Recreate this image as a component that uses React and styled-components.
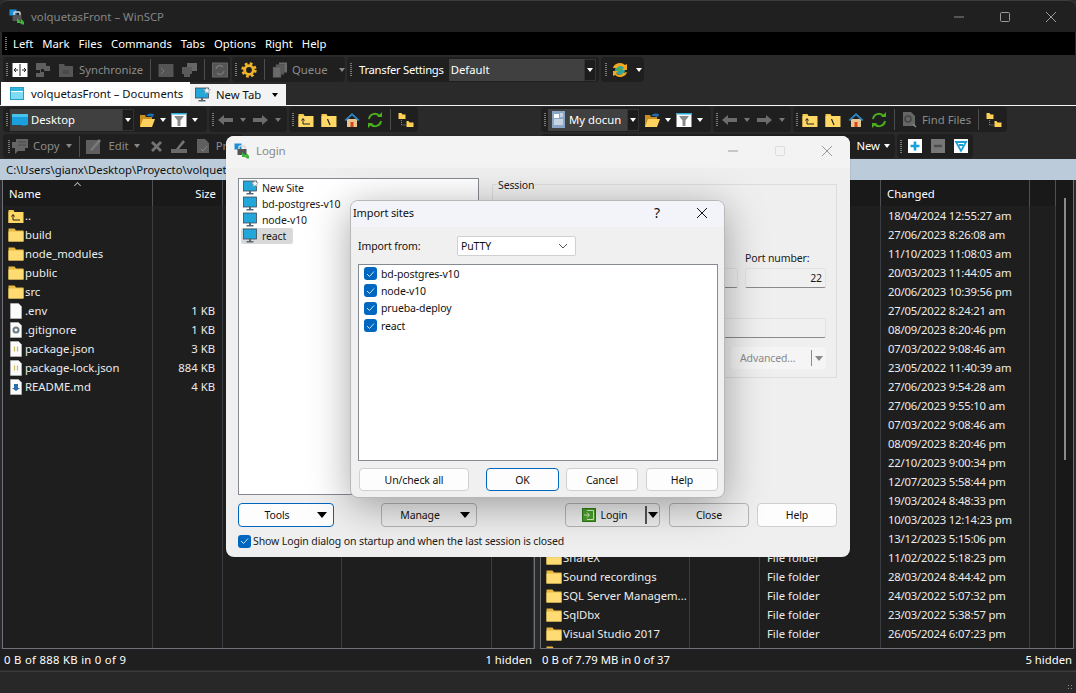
import React from 'react'
import styled, { createGlobalStyle } from 'styled-components'

const Global = createGlobalStyle`
  html, body { margin: 0; padding: 0; background: #2a2a2a; }
  * { box-sizing: border-box; }
`

const Ico = styled.svg`
  display: block;
  flex: none;
`
const Svg = ({ w = 16, h = 16, children }) => (
  <Ico width={w} height={h} viewBox={`0 0 ${w} ${h}`}>{children}</Ico>
)

const Logo = () => (
  <Svg>
    <rect x="0.5" y="0.5" width="7" height="6" fill="#1c8fd8" />
    <rect x="5" y="3" width="6" height="8" rx="1" fill="none" stroke="#d8d8d8" strokeWidth="1.5" />
    <rect x="3.5" y="6" width="9" height="6" fill="#555" />
    <path d="M8 9l4 4v-2.5h1l2 2.5v2.5h-2l-2-1.500h-3z" fill="#3db53a" />
  </Svg>
)
const Compare = () => (
  <Svg>
    <rect x="0.5" y="1" width="15" height="14" fill="#fff" />
    <path d="M8 2v12" stroke="#222" />
    <path d="M2 8h4M4 6L2 8l2 2M14 8h-4M12 6l2 2-2 2" stroke="#222" fill="none" />
  </Svg>
)
const SyncGrey = () => (
  <Svg>
    <path d="M1 1h10v3h4v5H9V7H6v3h3v5H1v-4h4V8H1z" fill="#5f5f5f" />
  </Svg>
)
const FolderGrey = () => (
  <Svg>
    <path d="M1 2h5l1 2h8v11H1z" fill="#565656" />
    <path d="M5 8h6v4H5z" fill="#4a4a4a" />
  </Svg>
)
const TermGrey = () => (
  <Svg>
    <rect x="0.5" y="2" width="15" height="13" fill="#555" />
    <path d="M3 6l3 3-3 3" stroke="#777" fill="none" />
  </Svg>
)
const MonitorsGrey = () => (
  <Svg>
    <rect x="6" y="1" width="10" height="8" fill="#666" />
    <rect x="1" y="5" width="10" height="7" fill="#5a5a5a" />
    <rect x="3" y="12" width="6" height="3" fill="#5a5a5a" />
  </Svg>
)
const RefreshGrey = () => (
  <Svg>
    <rect x="0.5" y="1" width="15" height="14" fill="#555" stroke="#666" />
    <path d="M4 7a4 4 0 0 1 7-2M12 9a4 4 0 0 1-7 2" stroke="#777" strokeWidth="1.500" fill="none" />
  </Svg>
)
const Gear = () => (
  <Svg>
    <circle cx="8" cy="8" r="6.200" fill="none" stroke="#f0b429" strokeWidth="3" strokeDasharray="2.600 2.270" />
    <circle cx="8" cy="8" r="4.300" fill="none" stroke="#f0b429" strokeWidth="2.800" />
  </Svg>
)
const QueueGrey = () => (
  <Svg>
    <rect x="7" y="0.500" width="8" height="10" fill="#6a6a6a" />
    <rect x="4" y="2.500" width="8" height="10" fill="#5c5c5c" stroke="#444" strokeWidth="0.500" />
    <rect x="1" y="5" width="8" height="10.500" fill="#6a6a6a" stroke="#444" strokeWidth="0.500" />
  </Svg>
)
const GlobeSync = () => (
  <Svg w={18} h={18}>
    <circle cx="9" cy="9" r="5" fill="#2fa6a0" />
    <path d="M6 7l3-1 1 3-3 2z" fill="#4caf3c" />
    <path d="M2 7a7 6 0 0 1 12-3l2-1v6h-5l2-2a4 4 0 0 0-7 0z" fill="#f0a820" />
    <path d="M16 11a7 6 0 0 1-12 3l-2 1v-5h5l-2 2a4 4 0 0 0 7 0z" fill="#f0a820" />
  </Svg>
)
const FolderOpen = () => (
  <Svg>
    <path d="M1 3h5l1 2h6v10H1z" fill="#c98f1f" />
    <path d="M1 15l3-8h12l-3 8z" fill="#ffd25e" />
    <path d="M7 4c2-3 5-3 8-2l-1 3c-2-1-4-1-7-1z" fill="#1f6fb5" />
  </Svg>
)
const Filter = () => (
  <Svg>
    <rect x="0.500" y="1" width="15" height="14" fill="#fff" />
    <rect x="0.500" y="1" width="15" height="1.500" fill="#27a8d8" />
    <path d="M3 4h10L9.500 8.500V14h-3V8.500z" fill="#8a8a8a" />
  </Svg>
)
const ArrowGrey = ({ dir }) => (
  <Svg w={15} h={12}>
    <path d={dir === 'left' ? 'M0 6l6-5v3h9v4H6v3z' : 'M15 6L9 1v3H0v4h9v3z'} fill="#6c6c6c" />
  </Svg>
)
const Parent = () => (
  <Svg>
    <path d="M0.500 2h5l1 2h8.500v11H0.500z" fill="#f7c948" />
    <path d="M0.500 4h15v11H0.500z" fill="#ffd866" />
    <path d="M5 7v5h7M3.500 8.500L5 6.500l1.500 2" stroke="#222" fill="none" />
  </Svg>
)
const RootFolder = () => (
  <Svg>
    <path d="M0.500 2h5l1 2h8.500v11H0.500z" fill="#f7c948" />
    <path d="M0.500 4h15v11H0.500z" fill="#ffd866" />
    <path d="M6.500 7l2.500 6" stroke="#222" strokeWidth="1.200" />
  </Svg>
)
const Home = () => (
  <Svg>
    <path d="M3 7h10v8H3z" fill="#e9c48d" />
    <path d="M0.500 8L8 1l7.500 7-1.500 1L8 3.500 2 9z" fill="#2b85c4" />
    <path d="M6.500 10h3v5h-3z" fill="#d9461e" />
  </Svg>
)
const RefreshGreen = () => (
  <Svg>
    <path d="M2 7a6 6 0 0 1 10.500-3M14 9a6 6 0 0 1-10.500 3" stroke="#4cae1e" strokeWidth="2" fill="none" />
    <path d="M10 5h5V0zM6 11H1v5z" fill="#4cae1e" />
  </Svg>
)
const Tree = () => (
  <Svg>
    <path d="M0.500 1h3l1 1.500h3V7H0.500z" fill="#ffcf56" />
    <path d="M8.500 9h2l1 1.500h4V15h-7z" fill="#ffcf56" />
    <path d="M3.500 8v5h4" stroke="#888" strokeDasharray="1 1" fill="none" />
  </Svg>
)
const Desktop = () => (
  <Svg>
    <rect x="0" y="2" width="16" height="11" fill="#1aa0dc" />
    <rect x="0" y="2" width="16" height="3" fill="#48c3ee" />
    <rect x="10" y="13" width="4" height="1" fill="#1d6fb0" />
  </Svg>
)
const DocBlue = () => (
  <Svg w={13} h={17}>
    <rect x="0" y="0" width="13" height="17" fill="#8aa6c6" />
    <rect x="2" y="3" width="5" height="4" fill="#fff" />
    <path d="M8 3h3M8 5h3M2 9h9M2 11h9M2 13h9" stroke="#fff" />
  </Svg>
)
const CopyGrey = () => (
  <Svg>
    <path d="M4 1h12v9h-3v3h-7l-3 3v-6H0V4h4z" fill="#656565" />
    <path d="M6 4h8M6 7h8" stroke="#4c4c4c" />
  </Svg>
)
const EditGrey = () => (
  <Svg>
    <rect x="1" y="2" width="14" height="14" fill="#5f5f5f" />
    <path d="M5 12L14 1l2 2-9 10z" fill="#7a7a7a" />
  </Svg>
)
const CrossGrey = () => (
  <Svg w={13} h={13}>
    <path d="M1 3l2-2 3.500 3.500L10 1l2 2-3.500 3.500L12 10l-2 2-3.500-3.500L3 12l-2-2 3.500-3.500z" fill="#737373" />
  </Svg>
)
const RenameGrey = () => (
  <Svg>
    <path d="M0 11h16v4H0z" fill="#6a6a6a" />
    <path d="M5 11l7-9 2 2-6 7z" fill="#747474" />
  </Svg>
)
const PropsGrey = () => (
  <Svg>
    <path d="M2 1h8l4 4v10H2z" fill="#5f5f5f" />
    <path d="M6 11l2 2 4-5" stroke="#888" fill="none" />
  </Svg>
)
const SquareOp = ({ sign }) => (
  <Svg w={14} h={14}>
    <rect width="14" height="14" fill={sign === 'minus' ? '#777' : '#fff'} />
    {sign === 'plus' && <path d="M7 2.500v9M2.500 7h9" stroke="#19a0d8" strokeWidth="2.600" />}
    {sign === 'minus' && <path d="M3 7h8" stroke="#4e4e4e" strokeWidth="2.600" />}
    {sign === 'filter' && <path d="M2 3h10L7 12zM5 6h4" stroke="#19a0d8" strokeWidth="1.800" fill="none" />}
  </Svg>
)
const FindGrey = () => (
  <Svg w={15} h={17}>
    <path d="M1 1h8l4 4v10H1z" fill="#666" />
    <circle cx="6" cy="8" r="3" fill="none" stroke="#444" strokeWidth="1.500" />
    <path d="M11 13l3 3" stroke="#888" strokeWidth="1.500" />
  </Svg>
)
const FolderFile = () => (
  <Svg>
    <path d="M0.500 1.500h6l1.500 2h7.500v11h-15z" fill="#e9b93f" />
    <path d="M0.500 4.500h15v10h-15z" fill="#ffdc73" />
  </Svg>
)
const Page = ({ kind }) => (
  <Svg>
    <path d="M2.500 0.500h8l3 3v12h-11z" fill="#fbfbfb" stroke="#d0d0d0" strokeWidth="0.500" />
    {kind === 'gear' && <circle cx="8" cy="8" r="2.500" fill="none" stroke="#6c7a86" strokeWidth="2" />}
    {kind === 'json' && <path d="M6.500 5.500v5M9.500 5.500v5" stroke="#c6bd63" strokeWidth="1.200" />}
    {kind === 'md' && <path d="M6 5h4v4h2l-4 3-4-3h2z" fill="#2a6ea8" />}
  </Svg>
)
const Monitor = ({ star }) => (
  <Svg>
    <rect x="0.500" y="1" width="13" height="10" fill="#23a7d8" stroke="#3f4a55" strokeWidth="0.800" />
    <path d="M6 11h2v2h2.500v1.500h-7V13H6z" fill="#5a6670" />
    {star && <path d="M12 0l1.100 2.300 2.400.3-1.800 1.600.5 2.400-2.200-1.200-2.200 1.200.5-2.400-1.800-1.600 2.400-.3z" fill="#f2f2f2" stroke="#8a8a8a" strokeWidth="0.500" />}
  </Svg>
)
const Check = () => (
  <CheckBox>
    <svg width="9" height="8" viewBox="0 0 9 8"><path d="M1 4l2.500 2.500L8 1.500" stroke="#cfe2f7" fill="none" /></svg>
  </CheckBox>
)
const EnterArrow = () => (
  <svg width="12" height="12" viewBox="0 0 12 12">
    <path d="M4 1.500h6.500v9H4M1 6h5M4 3.500L6.500 6 4 8.500" stroke="#d9eecf" fill="none" />
  </svg>
)

const font = `"Noto Sans", "Open Sans", sans-serif`

const Win = styled.div`
  width: 1076px;
  height: 693px;
  display: flex;
  flex-direction: column;
  position: relative;
  overflow: hidden;
  background: #2a2a2a;
  border-top: 1px solid #3c3c3c;
  border-radius: 8px 8px 0 0;
  font: 11.3px/16px ${font};
  color: #fff;
`
const TitleBar = styled.div`
  height: 31px;
  flex: none;
  background: #202020;
  display: flex;
  align-items: center;
  padding: 0 19px 0 9px;
  gap: 6px;
`
const TitleText = styled.span`
  flex: 1;
  color: #858585;
  font-size: 11.4px;
`
const WinButtons = styled.div`
  display: flex;
  align-items: center;
  gap: 34px;
`
const MenuBar = styled.div`
  height: 23px;
  flex: none;
  margin: 0 1px 2px 2px;
  background: #000;
  display: flex;
  align-items: center;
  padding-left: 3px;
  gap: 9px;
`
const Grip = styled.i`
  display: block;
  width: 2px;
  height: 13px;
  flex: none;
  margin-right: -3px;
  background: repeating-linear-gradient(to bottom, #7a7a7a 0 1px, transparent 1px 2px);
`
const ToolRow = styled.div`
  display: flex;
  gap: 2px;
  height: ${p => p.$h || 25}px;
  flex: none;
  padding-left: 3px;
  margin-bottom: ${p => p.$mb || 0}px;
`
const ToolGroup = styled.div`
  display: flex;
  align-items: center;
  justify-content: ${p => (p.$end ? 'flex-end' : 'flex-start')};
  width: ${p => p.$w}px;
  flex: none;
  overflow: hidden;
  gap: ${p => p.$gap || 7}px;
  padding: 0 ${p => p.$pr || 0}px 0 ${p => p.$pl || 3}px;
  background: #1f1f1f;
  border-radius: 4px;
`
const IconRun = styled.div`
  display: flex;
  align-items: center;
  gap: 8px;
  margin-left: ${p => p.$ml || 0}px;
`
const ToolLabel = styled.span`
  color: ${p => (p.$off ? '#8b8b8b' : '#fff')};
  white-space: nowrap;
  margin-left: ${p => p.$ml || 0}px;
  margin-right: ${p => p.$mr || 0}px;
  letter-spacing: ${p => p.$ls || 0}px;
`
const Sep = styled.i`
  display: block;
  width: 1px;
  height: 21px;
  background: #4c4c4c;
  flex: none;
`
const Caret = styled.i`
  display: block;
  flex: none;
  width: 0;
  height: 0;
  border: ${p => p.$s || 3.5}px solid transparent;
  border-top: ${p => (p.$s || 3.5) + 0.5}px solid ${p => p.$c || '#fff'};
  border-bottom: 0;
  margin: 0 ${p => p.$mx || 0}px;
`
const SelectBox = styled.div`
  width: ${p => p.$w}px;
  height: 22px;
  flex: none;
  display: flex;
  align-items: center;
  gap: ${p => p.$gap || 3}px;
  padding-left: ${p => p.$pl || 2}px;
  background: #404040;
`
const SelectValue = styled.span`
  flex: 1;
  white-space: nowrap;
  overflow: hidden;
`
const SelectArrow = styled.span`
  width: 12px;
  height: 22px;
  flex: none;
  display: flex;
  align-items: center;
  justify-content: center;
  background: #1c1c1c;
  border: 1px solid #333;
`
const TabRow = styled.div`
  height: 23px;
  flex: none;
  display: flex;
  align-items: flex-end;
  padding-left: 1px;
  border-bottom: 1px solid #f5f5f5;
  margin-top: 1px;
  margin-bottom: 1px;
`
const Tab = styled.div`
  width: ${p => p.$w}px;
  height: ${p => (p.$active ? 23 : 21)}px;
  display: flex;
  align-items: center;
  gap: 5px;
  padding-left: ${p => p.$pl}px;
  background: ${p => (p.$active ? '#fff' : '#f3f3f3')};
  color: #111;
  white-space: nowrap;
`
const TabIcon = styled.i`
  display: block;
  flex: none;
  width: 14px;
  height: 13px;
  margin-right: 2px;
  background: linear-gradient(#2fb4dd 0 3px, #fff 3px 4px, #7fdcf2 4px);
  border: 1px solid #2a9cc7;
`
const Panes = styled.div`
  flex: 1;
  min-height: 0;
  display: grid;
  grid-template-columns: 538px 538px;
`
const Pane = styled.div`
  display: flex;
  flex-direction: column;
  min-height: 0;
  min-width: 0;
`
const PathBar = styled.div`
  height: 21px;
  flex: none;
  background: #bccbd9;
  color: #111;
  padding: 3px 0 0 6px;
  margin-right: ${p => p.$mr || 0}px;
  white-space: nowrap;
  overflow: hidden;
`
const FileArea = styled.div`
  flex: 1;
  min-height: 0;
  display: flex;
  margin: 0 ${p => p.$mr}px 0 ${p => p.$ml}px;
  border: 1px solid #6e7278;
  border-top: 0;
  background: #1e1e1e;
`
const FileMain = styled.div`
  flex: 1;
  min-width: 0;
  display: flex;
  flex-direction: column;
`
const HeaderRow = styled.div`
  height: 26px;
  flex: none;
  display: grid;
  grid-template-columns: ${p => p.$cols};
  background: #191919;
`
const HeaderCell = styled.div`
  position: relative;
  display: flex;
  align-items: center;
  justify-content: ${p => (p.$right ? 'flex-end' : 'flex-start')};
  padding: 1px ${p => (p.$right ? 6 : 0)}px 0 ${p => (p.$right ? 0 : p.$pl || 6)}px;
  border-right: 1px solid #4c4f54;
  color: #fff;
`
const SortMark = styled.i`
  position: absolute;
  top: 3px;
  left: 72px;
  width: 5px;
  height: 5px;
  border-left: 1px solid #aaa;
  border-top: 1px solid #aaa;
  transform: rotate(45deg);
`
const ListBody = styled.div`
  flex: 1;
  min-height: 0;
  overflow: hidden;
  display: grid;
  grid-template-columns: ${p => p.$cols};
`
const Col = styled.div`
  border-right: 1px solid #3a3d42;
  min-width: 0;
`
const Cell = styled.div`
  height: 19px;
  display: flex;
  align-items: center;
  gap: 1px;
  padding: 0 ${p => (p.$right ? 7 : 0)}px 0 ${p => p.$pl || 0}px;
  justify-content: ${p => (p.$right ? 'flex-end' : 'flex-start')};
  color: #ececec;
  letter-spacing: ${p => (p.$date ? '-0.2px' : 'normal')};
  white-space: nowrap;
  overflow: hidden;
`
const ScrollTrack = styled.div`
  width: 17px;
  flex: none;
  display: flex;
  justify-content: center;
  background: #181818;
`
const ScrollThumb = styled.i`
  display: block;
  width: 2px;
  height: 262px;
  margin-top: 18px;
  background: #8a8a8a;
`
const StatusBar = styled.div`
  height: 22px;
  flex: none;
  display: flex;
  justify-content: space-between;
  align-items: center;
  padding: 0 ${p => p.$pr}px 0 ${p => p.$pl}px;
  background: #1f1f1f;
  border-bottom: 1px solid #2e2e2e;
`
const StatusText = styled.span`
  letter-spacing: ${p => p.$ls || 0}px;
`
const BottomBar = styled.div`
  height: 22px;
  flex: none;
  background: #282828;
  border-top: 1px solid #3a3a3a;
  display: flex;
  justify-content: flex-end;
  align-items: flex-end;
  padding: 0 2px 2px 0;
`
const SizeGrip = styled.i`
  display: block;
  width: 7px;
  height: 7px;
  background: radial-gradient(circle, #8a8a8a 0 1px, transparent 1px) 0 0 / 3px 3px;
`

/* Dialogs lie over the panes */
const Login = styled.div`
  position: absolute;
  left: 226px;
  top: 135px;
  width: 624px;
  height: 421px;
  display: flex;
  flex-direction: column;
  border-radius: 8px;
  overflow: hidden;
  background: #efefef;
  color: #1a1a1a;
  font-size: 10.5px;
  letter-spacing: -0.12px;
  box-shadow: 0 0 1px rgba(0, 0, 0, .6);
`
const DlgTitle = styled.div`
  height: 32px;
  flex: none;
  display: flex;
  align-items: center;
  gap: 6px;
  padding: 0 17px 2px 8px;
  background: #f3f3f3;
`
const DlgTitleText = styled.span`
  flex: 1;
  color: #8a8a8a;
  font-size: 11.5px;
`
const DlgButtons = styled.div`
  display: flex;
  align-items: center;
  gap: 35px;
`
const LoginMain = styled.div`
  display: flex;
  gap: 13px;
  margin: 10px 13px 0 12px;
`
const TreeBox = styled.div`
  width: 241px;
  height: 317px;
  flex: none;
  padding: 1px 1px;
  background: #fff;
  border: 1px solid #868a91;
`
const TreeRow = styled.div`
  width: fit-content;
  height: 16px;
  display: flex;
  align-items: center;
  gap: 3px;
  padding: 0 3px 0 2px;
  margin-left: 1px;
  min-width: 52px;
  border-radius: 2px;
  white-space: nowrap;
  background: ${p => (p.$sel ? '#d9d9d9' : 'transparent')};
`
const Session = styled.div`
  position: relative;
  flex: 1;
  height: 194px;
  margin-top: 6px;
  padding: 65px 10px 0;
  display: flex;
  flex-direction: column;
  align-items: flex-end;
  border: 1px solid #dcdcdc;
`
const Legend = styled.span`
  position: absolute;
  left: 4px;
  top: -8px;
  padding: 0 1px;
  background: #efefef;
`
const FieldLabel = styled.label`
  width: 81px;
  height: 16px;
`
const FieldRow = styled.div`
  display: flex;
  gap: 7px;
  margin-top: 2px;
`
const Field = styled.div`
  width: ${p => p.$w}px;
  height: 20px;
  margin-top: ${p => p.$mt || 0}px;
  padding: 1px 3px;
  text-align: right;
  background: #f0f0f0;
  border: 1px solid #e2e2e2;
  border-bottom-color: #8a8a8a;
  border-radius: 2px;
`
const AdvancedBtn = styled.div`
  width: 95px;
  height: 22px;
  margin-top: 9px;
  display: flex;
  align-items: center;
  justify-content: space-between;
  padding: 0 3px 0 9px;
  color: #8a8a8a;
  background: #f5f5f5;
  border-radius: 4px;
`
const SplitLine = styled.i`
  display: block;
  width: 1px;
  height: 16px;
  background: #8a8a8a;
  margin-left: auto;
  margin-right: 3px;
`
const LoginFooter = styled.div`
  display: flex;
  margin: 8px 13px 0 12px;
`
const Btn = styled.div`
  width: ${p => p.$w}px;
  height: ${p => p.$h || 24}px;
  flex: none;
  position: relative;
  display: flex;
  align-items: center;
  justify-content: center;
  gap: 5px;
  padding-right: ${p => p.$pr || 0}px;
  margin-left: ${p => p.$ml || 0}px;
  color: #111;
  background: ${p => (p.$plain ? 'transparent' : '#fdfdfd')};
  border: 1px solid ${p => (p.$primary ? '#0067c0' : p.$plain ? '#b4b4b4' : '#d0d0d0')};
  border-radius: 4px;
`
const BtnCaret = styled.i`
  position: absolute;
  right: ${p => p.$r || 6}px;
  top: 8px;
  width: 0;
  height: 0;
  border: 5px solid transparent;
  border-top: 6px solid #000;
  border-bottom: 0;
`
const LoginSplit = styled.i`
  position: absolute;
  right: 12px;
  top: 2px;
  width: 2px;
  height: 18px;
  background: #555;
`
const LoginGlyph = styled.i`
  display: flex;
  align-items: center;
  justify-content: center;
  width: 14px;
  height: 14px;
  background: #4ba02a;
  border: 1px solid #2f7a16;
`
const ShowRow = styled.div`
  display: flex;
  align-items: center;
  gap: 2px;
  margin: 6px 0 0 12px;
`
const CheckBox = styled.span`
  width: 13px;
  height: 13px;
  flex: none;
  display: flex;
  align-items: center;
  justify-content: center;
  background: #0067c0;
  border-radius: 3px;
`
const ImportDlg = styled.div`
  position: absolute;
  left: 350px;
  top: 199px;
  width: 375px;
  height: 298px;
  display: flex;
  flex-direction: column;
  background: #f0f0f0;
  color: #111;
  font-size: 10.5px;
  letter-spacing: -0.12px;
  border: 1px solid #b8b8b8;
  border-radius: 8px;
  overflow: hidden;
  box-shadow: 0 8px 40px rgba(0, 0, 0, .35);
`
const ImportTitle = styled.div`
  height: 26px;
  flex: none;
  display: flex;
  align-items: center;
  padding: 0 16px 2px 2px;
  background: #f3f4f9;
  font-size: 11px;
`
const ImportHelp = styled.span`
  margin-left: auto;
  margin-right: 36px;
  font-size: 14px;
`
const ImportFrom = styled.div`
  display: flex;
  align-items: center;
  margin: 9px 0 0 7px;
`
const ImportLabel = styled.span`
  width: 99px;
`
const Combo = styled.div`
  width: 119px;
  height: 20px;
  display: flex;
  align-items: center;
  justify-content: space-between;
  padding: 0 7px 0 3px;
  background: #fff;
  border: 1px solid #d0d0d0;
  border-radius: 2px;
`
const CheckList = styled.div`
  height: 197px;
  margin: 8px 6px 0 7px;
  padding: 0 0 0 5px;
  background: #fff;
  border: 1px solid #868a91;
`
const CheckRow = styled.div`
  height: 17.300px;
  display: flex;
  align-items: center;
  gap: 4px;
`
const ImportFooter = styled.div`
  display: flex;
  margin: 7px 0 0 8px;
`

const LEFT_COLS = '150px 70px 119px 150px 1fr'
const RIGHT_COLS = '149px 70px 121px 149px 26px'

const leftFiles = [
  { name: '..', icon: <Parent /> },
  { name: 'build', icon: <FolderFile /> },
  { name: 'node_modules', icon: <FolderFile /> },
  { name: 'public', icon: <FolderFile /> },
  { name: 'src', icon: <FolderFile /> },
  { name: '.env', size: '1 KB', icon: <Page /> },
  { name: '.gitignore', size: '1 KB', icon: <Page kind="gear" /> },
  { name: 'package.json', size: '3 KB', icon: <Page kind="json" /> },
  { name: 'package-lock.json', size: '884 KB', icon: <Page kind="json" /> },
  { name: 'README.md', size: '4 KB', icon: <Page kind="md" /> },
]

const changed = [
  '18/04/2024 12:55:27 am', '27/06/2023 8:26:08 am', '11/10/2023 11:08:03 am', '20/03/2023 11:44:05 am',
  '20/06/2023 10:39:56 pm', '27/05/2022 8:24:21 am', '08/09/2023 8:20:46 pm', '07/03/2022 9:08:46 am',
  '23/05/2022 11:40:39 am', '27/06/2023 9:54:28 am', '27/06/2023 9:55:10 am', '07/03/2022 9:08:46 am',
  '08/09/2023 8:20:46 pm', '22/10/2023 9:00:34 pm', '12/07/2023 5:58:44 pm', '19/03/2024 8:48:33 pm',
  '10/03/2023 12:14:23 pm', '13/12/2023 5:15:06 pm', '11/02/2022 5:18:23 pm', '28/03/2024 8:44:42 pm',
  '24/03/2022 5:07:32 pm', '23/03/2022 5:38:57 pm', '26/05/2024 6:07:23 pm',
]
// names above ShareX sit behind the dialog
const rightNames = { 18: 'ShareX', 19: 'Sound recordings', 20: 'SQL Server Managem...', 21: 'SqlDbx', 22: 'Visual Studio 2017', 23: ' ' }

const WinGlyph = ({ kind, c }) => (
  <svg width="12" height="12" viewBox="0 0 12 12" style={{ display: 'block' }}>
    {kind === 'min' && <path d="M1 6h10" stroke={c} />}
    {kind === 'max' && <rect x="1.500" y="1.500" width="9" height="9" rx="1" fill="none" stroke={c} />}
    {kind === 'close' && <path d="M1 1l10 10M11 1L1 11" stroke={c} />}
  </svg>
)

const PaneToolsLeft = () => (
  <>
    <ToolRow $mb={2}>
      <ToolGroup $w={204} $gap={5}>
        <Grip />
        <SelectBox $w={124} $pl={2}>
          <Desktop />
          <SelectValue>Desktop</SelectValue>
          <SelectArrow><Caret /></SelectArrow>
        </SelectBox>
        <FolderOpen /><Caret /><Filter /><Caret />
      </ToolGroup>
      <ToolGroup $w={78} $gap={7}>
        <Grip /><ArrowGrey dir="left" /><Caret $c="#777" /><ArrowGrey dir="right" /><Caret $c="#777" />
      </ToolGroup>
      <ToolGroup $w={129} $gap={7}>
        <Grip /><Parent /><RootFolder /><Home /><RefreshGreen /><Sep /><Tree />
      </ToolGroup>
    </ToolRow>
    <ToolRow $h={24} $mb={1}>
      <ToolGroup $w={240} $gap={5} $pl={5}>
        <Grip />
        <CopyGrey /><ToolLabel $off>Copy</ToolLabel><Caret $c="#888" $mx={2} /><Sep />
        <EditGrey /><ToolLabel $off $ml={2}>Edit</ToolLabel><Caret $c="#888" />
        <IconRun $ml={5}><CrossGrey /><RenameGrey /><PropsGrey /></IconRun>
        <ToolLabel $off>Properties</ToolLabel>
      </ToolGroup>
    </ToolRow>
  </>
)

const PaneToolsRight = () => (
  <>
    <ToolRow $mb={2}>
      <ToolGroup $w={170} $gap={5}>
        <Grip />
        <SelectBox $w={91} $pl={4} $gap={4}>
          <DocBlue />
          <SelectValue>My docun</SelectValue>
          <SelectArrow><Caret /></SelectArrow>
        </SelectBox>
        <FolderOpen /><Caret /><Filter /><Caret />
      </ToolGroup>
      <ToolGroup $w={78} $gap={7}>
        <Grip /><ArrowGrey dir="left" /><Caret $c="#777" /><ArrowGrey dir="right" /><Caret $c="#777" />
      </ToolGroup>
      <ToolGroup $w={214} $gap={7}>
        <Grip /><Parent /><RootFolder /><Home /><RefreshGreen /><Sep /><FindGrey />
        <ToolLabel $off $ml={-2}>Find Files</ToolLabel><Sep /><Tree />
      </ToolGroup>
    </ToolRow>
    <ToolRow $h={24} $mb={1}>
      <ToolGroup $w={354} $end $gap={4} $pr={5}>
        <ToolLabel>New</ToolLabel><Caret />
      </ToolGroup>
      <ToolGroup $w={76} $gap={9}>
        <Grip /><SquareOp sign="plus" /><SquareOp sign="minus" /><SquareOp sign="filter" />
      </ToolGroup>
    </ToolRow>
  </>
)

export default function App() {
  return (
    <Win>
      <Global />
      <TitleBar>
        <Logo />
        <TitleText>volquetasFront – WinSCP</TitleText>
        <WinButtons>
          <WinGlyph kind="min" c="#8a8a8a" /><WinGlyph kind="max" c="#9a9a9a" /><WinGlyph kind="close" c="#9a9a9a" />
        </WinButtons>
      </TitleBar>
      <MenuBar>
        <Grip />
        {['Left', 'Mark', 'Files', 'Commands', 'Tabs', 'Options', 'Right', 'Help'].map(m => <span key={m}>{m}</span>)}
      </MenuBar>
      <ToolRow>
        <ToolGroup $w={227}>
          <Grip /><Compare /><SyncGrey /><FolderGrey />
          <ToolLabel $off $ml={-2}>Synchronize</ToolLabel><Sep /><TermGrey /><MonitorsGrey /><Sep /><RefreshGrey />
        </ToolGroup>
        <ToolGroup $w={113}>
          <Grip /><Gear /><Sep /><QueueGrey />
          <ToolLabel $off $ml={-3}>Queue</ToolLabel><Caret $c="#888" $mx={4} />
        </ToolGroup>
        <ToolGroup $w={252}>
          <Grip />
          <ToolLabel $ml={3} $mr={-2} $ls={-0.3}>Transfer Settings</ToolLabel>
          <SelectBox $w={147} $pl={2}>
            <SelectValue>Default</SelectValue>
            <SelectArrow><Caret /></SelectArrow>
          </SelectBox>
        </ToolGroup>
        <ToolGroup $w={43} $pl={4}>
          <Grip /><GlobeSync /><Caret />
        </ToolGroup>
      </ToolRow>
      <TabRow>
        <Tab $w={189} $active $pl={9}><TabIcon />volquetasFront – Documents</Tab>
        <Tab $w={96} $pl={5}><Monitor star />New Tab<Caret $c="#000" $mx={6} /></Tab>
      </TabRow>
      <Panes>
        <Pane>
          <PaneToolsLeft />
          <PathBar $mr={1}>C:\Users\gianx\Desktop\Proyecto\volquetasFront</PathBar>
          <FileArea $ml={2} $mr={3}>
            <FileMain>
              <HeaderRow $cols={LEFT_COLS}>
                <HeaderCell>Name<SortMark /></HeaderCell>
                <HeaderCell $right>Size</HeaderCell>
                <HeaderCell /><HeaderCell /><HeaderCell />
              </HeaderRow>
              <ListBody $cols={LEFT_COLS}>
                <Col>
                  {leftFiles.map(f => <Cell key={f.name} $pl={5}>{f.icon}{f.name}</Cell>)}
                </Col>
                <Col>
                  {leftFiles.map(f => <Cell key={f.name} $right>{f.size}</Cell>)}
                </Col>
                <Col /><Col /><Col />
              </ListBody>
            </FileMain>
          </FileArea>
          <StatusBar $pl={4} $pr={6}><StatusText $ls={0.3}>0 B of 888 KB in 0 of 9</StatusText><StatusText>1 hidden</StatusText></StatusBar>
        </Pane>
        <Pane>
          <PaneToolsRight />
          <PathBar>C:\Users\gianx\Documents</PathBar>
          <FileArea $ml={2} $mr={2}>
            <FileMain>
              <HeaderRow $cols={RIGHT_COLS}>
                <HeaderCell>Name</HeaderCell>
                <HeaderCell $right>Size</HeaderCell>
                <HeaderCell>Type</HeaderCell>
                <HeaderCell>Changed</HeaderCell>
                <HeaderCell />
              </HeaderRow>
              <ListBody $cols={RIGHT_COLS}>
                <Col>
                  {[...Array(24).keys()].map(i => (
                    <Cell key={i} $pl={5}>{rightNames[i] && <FolderFile />}{rightNames[i]}</Cell>
                  ))}
                </Col>
                <Col />
                <Col>
                  {changed.map((c, i) => <Cell key={i} $pl={7}>File folder</Cell>)}
                </Col>
                <Col>
                  {changed.map((c, i) => <Cell key={i} $pl={7} $date>{c}</Cell>)}
                </Col>
                <Col />
              </ListBody>
            </FileMain>
            <ScrollTrack><ScrollThumb /></ScrollTrack>
          </FileArea>
          <StatusBar $pl={4} $pr={4}><StatusText>0 B of 7.79 MB in 0 of 37</StatusText><StatusText>5 hidden</StatusText></StatusBar>
        </Pane>
      </Panes>
      <BottomBar><SizeGrip /></BottomBar>

      <Login>
        <DlgTitle>
          <Logo />
          <DlgTitleText>Login</DlgTitleText>
          <DlgButtons>
            <WinGlyph kind="min" c="#999" /><WinGlyph kind="max" c="#ddd" /><WinGlyph kind="close" c="#999" />
          </DlgButtons>
        </DlgTitle>
        <LoginMain>
          <TreeBox>
            <TreeRow><Monitor star />New Site</TreeRow>
            <TreeRow><Monitor />bd-postgres-v10</TreeRow>
            <TreeRow><Monitor />node-v10</TreeRow>
            <TreeRow $sel><Monitor />react</TreeRow>
          </TreeBox>
          <Session>
            <Legend>Session</Legend>
            <FieldLabel>Port number:</FieldLabel>
            <FieldRow><Field $w={200} /><Field $w={81}>22</Field></FieldRow>
            <Field $w={320} $mt={30} />
            <AdvancedBtn>Advanced...<SplitLine /><Caret $c="#888" $s={4.5} /></AdvancedBtn>
          </Session>
        </LoginMain>
        <LoginFooter>
          <Btn $w={96} $primary $pr={18}>Tools<BtnCaret /></Btn>
          <Btn $w={96} $ml={47} $plain $pr={18}>Manage<BtnCaret /></Btn>
          <Btn $w={95} $ml={88} $plain $pr={16}><LoginGlyph><EnterArrow /></LoginGlyph>Login<LoginSplit /><BtnCaret $r={1} /></Btn>
          <Btn $w={80} $ml={9} $plain>Close</Btn>
          <Btn $w={80} $ml={8}>Help</Btn>
        </LoginFooter>
        <ShowRow><Check />Show Login dialog on startup and when the last session is closed</ShowRow>
      </Login>

      <ImportDlg>
        <ImportTitle>
          Import sites
          <ImportHelp>?</ImportHelp>
          <WinGlyph kind="close" c="#111" />
        </ImportTitle>
        <ImportFrom>
          <ImportLabel>Import from:</ImportLabel>
          <Combo>PuTTY
            <svg width="10" height="6" viewBox="0 0 10 6"><path d="M1 1l4 4 4-4" stroke="#555" fill="none" /></svg>
          </Combo>
        </ImportFrom>
        <CheckList>
          {['bd-postgres-v10', 'node-v10', 'prueba-deploy', 'react'].map(s => (
            <CheckRow key={s}><Check />{s}</CheckRow>
          ))}
        </CheckList>
        <ImportFooter>
          <Btn $w={110} $h={23}>Un/check all</Btn>
          <Btn $w={73} $h={23} $ml={17} $primary>OK</Btn>
          <Btn $w={72} $h={23} $ml={7}>Cancel</Btn>
          <Btn $w={72} $h={23} $ml={8}>Help</Btn>
        </ImportFooter>
      </ImportDlg>
    </Win>
  )
}
